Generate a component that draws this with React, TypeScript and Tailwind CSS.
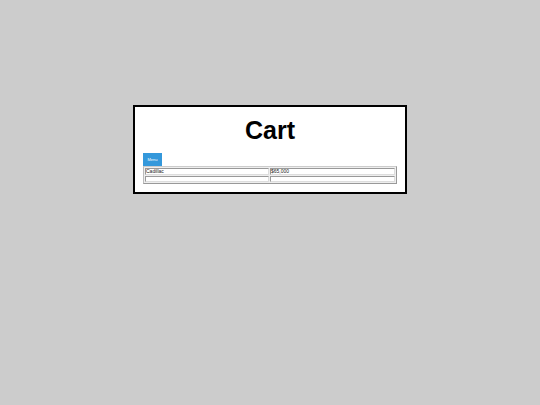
const rows = [
  { name: "Cadillac", price: "$65,000" },
  { name: "", price: "" },
];

const cell = "h-[6px] border border-t-[#999999] border-r-[#dddddd] border-b-[#dddddd] border-l-[#999999] bg-white p-0";

export default function App() {
  return (
    <main className="min-h-screen bg-[#cccccc] pt-[105px] font-['Liberation_Sans',Arial,sans-serif] text-black">
      <section className="mx-auto box-content w-1/2 border-2 border-black bg-white">
        <div className="p-2">
          <h1 className="text-center text-[25px] leading-[30px] font-bold">Cart</h1>
          <button type="button" className="mt-2 block h-[13px] w-[19px] bg-[#3498db] text-center text-[4px] leading-[13px] text-white">
            Menu
          </button>
          <table className="w-full table-fixed border-separate border-spacing-px border border-t-[#cccccc] border-r-[#999999] border-b-[#999999] border-l-[#bbbbbb] bg-[#eeeeee] text-[5px] leading-[5px] text-[#222222]">
            <colgroup>
              <col className="w-[124px]" />
              <col />
            </colgroup>
            <tbody>
              {rows.map((row, index) => (
                <tr key={index}>
                  <td className={cell}>{row.name}</td>
                  <td className={cell}>{row.price}</td>
                </tr>
              ))}
            </tbody>
          </table>
        </div>
      </section>
    </main>
  );
}
